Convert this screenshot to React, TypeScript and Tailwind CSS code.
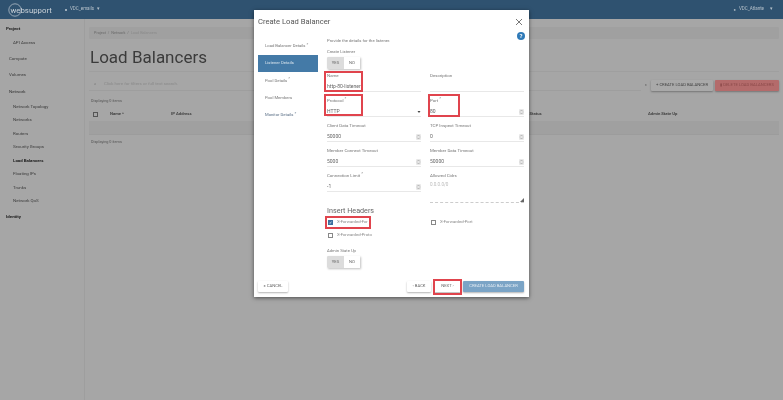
import React from "react";

const side: [string, string][] = [
  ["Project", "h-[14px] pl-[6px] font-bold text-[#222]"],
  ["API Access", "h-[15px] pl-[13px] text-[#3c3c3c]"],
  ["Compute", "h-[16px] pl-[9px] text-[#3c3c3c]"],
  ["Volumes", "h-[17px] pl-[9px] text-[#3c3c3c]"],
  ["Network", "h-[16px] pl-[9px] text-[#333]"],
  ["Network Topology", "h-[14px] pl-[13px] text-[#3c3c3c]"],
  ["Networks", "h-[13px] pl-[13px] text-[#3c3c3c]"],
  ["Routers", "h-[14px] pl-[13px] text-[#3c3c3c]"],
  ["Security Groups", "h-[13px] pl-[13px] text-[#3c3c3c]"],
  ["Load Balancers", "h-[14px] pl-[13px] font-bold text-[#222]"],
  ["Floating IPs", "h-[13px] pl-[13px] text-[#3c3c3c]"],
  ["Trunks", "h-[14px] pl-[13px] text-[#3c3c3c]"],
  ["Network QoS", "h-[13px] pl-[13px] text-[#3c3c3c]"],
  ["Identity", "h-[18px] pl-[6px] font-bold text-[#222]"],
];

function Spin() {
  return (
    <svg width="5" height="6" viewBox="0 0 5 6" className="rounded-[1px] bg-[#e8e8e8]">
      <path d="M1.2 2.4 L2.5 1 L3.8 2.4 M1.2 3.6 L2.5 5 L3.8 3.6" fill="none" stroke="#888" strokeWidth="0.5" />
    </svg>
  );
}

function Field({ label, value, req, spin, select }: { label: string; value: string; req?: boolean; spin?: boolean; select?: boolean }) {
  return (
    <div className="flex h-[25px] flex-col">
      <div className="mt-[5px] h-[6px] text-[4.4px] leading-[6px] text-[#777]">
        {label}
        {req && <sup className="text-[4px] leading-[0]"> *</sup>}
      </div>
      <div className="mt-[3px] flex h-[10px] items-end justify-between border-b border-[#e8e8e8] pb-[1px] text-[5px] leading-[7px] text-[#666]">
        <span>{value}</span>
        {spin && <Spin />}
        {select && (
          <svg width="4" height="6" viewBox="0 0 4 6">
            <path d="M0.5 2 L3.5 2 L2 4 Z" fill="#444" />
          </svg>
        )}
      </div>
    </div>
  );
}

function Toggle() {
  return (
    <div className="flex h-[12px] w-[33px] text-[4.2px] text-[#666] shadow-[1px_1px_2px_rgba(0,0,0,0.25)]">
      <div className="flex w-[17px] items-center justify-center rounded-l-[1px] bg-[#dcdcdc]">YES</div>
      <div className="flex w-[16px] items-center justify-center rounded-r-[1px] bg-white">NO</div>
    </div>
  );
}

function Check({ label, on }: { label: string; on?: boolean }) {
  return (
    <div className="flex h-[13px] items-center gap-[4px] pl-[1px] text-[4.2px] text-[#888]">
      <span className={`flex h-[5px] w-[5px] items-center justify-center border text-[4px] leading-none text-white ${on ? "border-[#3d6f9e] bg-[#3d6f9e]" : "border-[#888] bg-white"}`}>
        {on ? "✓" : ""}
      </span>
      {label}
    </div>
  );
}

function Btn({ children, cls }: { children: React.ReactNode; cls: string }) {
  return <div className={`flex h-[11px] items-center justify-center rounded-[1px] text-[4.2px] shadow-[0_1px_2px_rgba(0,0,0,0.3)] ${cls}`}>{children}</div>;
}

function Red({ cls }: { cls: string }) {
  return <div className={`absolute border-[2px] border-[#e0444d] ${cls}`} />;
}

export default function App() {
  return (
    <div className="relative h-[400px] w-[783px] overflow-hidden bg-[#a6a6a6] font-['Roboto',sans-serif] blur-[0.35px]">
      <header className="flex h-[19px] items-center justify-between bg-[#2f5270] pl-[8px] pr-[10px] text-[4.5px] text-[#b5c0ca]">
        <div className="flex items-center">
          <svg width="44" height="14" viewBox="0 0 44 14" className="mr-[13px]">
            <circle cx="7" cy="7" r="6.2" fill="none" stroke="#c3ccd4" strokeWidth="0.7" />
            <text x="2.5" y="9.6" fill="#c9d1d8" fontSize="7.8" fontFamily="Roboto, sans-serif">websupport</text>
          </svg>
          <span className="mr-[3px] h-[2px] w-[2px] rounded-full bg-[#c3ccd4]" />
          <span>VDC_emails</span>
          <span className="ml-[3px]">▾</span>
        </div>
        <div className="flex items-center gap-[3px]">
          <span className="text-[4px]">●</span>
          <span>VDC_Atlante</span>
          <span className="ml-[3px]">▾</span>
        </div>
      </header>

      <div className="flex h-[381px]">
        <aside className="w-[85px] border-r border-[#9e9e9e] pt-[3px] text-[4.4px]">
          {side.map(([t, c]) => (
            <div key={t} className={`flex items-center ${c}`}>{t}</div>
          ))}
        </aside>

        <main className="flex-1 pl-[4px] pr-[4px] pt-[8px]">
          <div className="flex h-[12px] items-center rounded-[1px] bg-[#a0a0a0] pl-[5px] text-[3.8px] text-[#6a6a6a]">
            Project&nbsp;&nbsp;/&nbsp;&nbsp;Network&nbsp;&nbsp;/&nbsp;&nbsp;<span className="text-[#8a8a8a]">Load Balancers</span>
          </div>
          <div className="mt-[5px] h-[28px] border-b border-[#9f9f9f] pl-[1px] text-[17px] leading-[26px] text-[#3b3b3b]">Load Balancers</div>
          <div className="mt-[7px] flex h-[12px] items-center">
            <div className="flex h-[12px] flex-1 items-center border-b border-[#9e9e9e] pl-[5px] text-[4.4px] text-[#8a8a8a]">
              <span className="mr-[8px] text-[#666]">⌕</span>Click here for filters or full text search.
            </div>
            <span className="mx-[4px] text-[4px] text-[#666]">×</span>
            <Btn cls="mr-[2px] w-[62px] bg-[#a9a9a9] text-[#444]">+ CREATE LOAD BALANCER</Btn>
            <Btn cls="w-[64px] bg-[#b46b6b] text-[#8c4a4a]">▮ DELETE LOAD BALANCERS</Btn>
          </div>
          <div className="mt-[7px] pl-[2px] text-[3.8px] text-[#555]">Displaying 0 items</div>
          <div className="mt-[4px] flex h-[13px] items-center text-[4.2px] font-bold text-[#444]">
            <span className="ml-[4px] h-[5px] w-[5px] border border-[#555]" />
            <span className="ml-[12px] w-[61px]">Name ^</span>
            <span className="w-[339px]">IP Address</span>
            <span className="w-[138px]">Operating Status</span>
            <span>Admin State Up</span>
          </div>
          <div className="h-[14px] border-b border-[#9c9c9c] bg-[#a0a0a0]" />
          <div className="mt-[4px] pl-[2px] text-[3.8px] text-[#555]">Displaying 0 items</div>
        </main>
      </div>

      <div className="absolute left-[254px] top-[10px] h-[287px] w-[275px] bg-white px-[4px] shadow-[0_1px_4px_rgba(0,0,0,0.55)]">
        <div className="flex h-[22px] items-center justify-between pt-[1px]">
          <span className="text-[7.6px] text-[#555]">Create Load Balancer</span>
          <svg width="8" height="8" viewBox="0 0 8 8" className="mr-[2px]">
            <path d="M1 1 L7 7 M7 1 L1 7" stroke="#555" strokeWidth="0.8" />
          </svg>
        </div>

        <div className="flex">
          <nav className="mt-[6px] w-[60px] text-[4.2px] text-[#777]">
            <div className="flex h-[17px] items-center pl-[7px]">Load Balancer Details<sup className="ml-[1px] text-[4px] leading-[0]">*</sup></div>
            <div className="flex h-[17px] items-center bg-[#447aa7] pl-[7px] text-[#d7e3ec]">Listener Details</div>
            <div className="flex h-[18px] items-center pl-[7px]">Pool Details<sup className="ml-[1px] text-[4px] leading-[0]">*</sup></div>
            <div className="flex h-[17px] items-center pl-[7px]">Pool Members</div>
            <div className="flex h-[17px] items-center pl-[7px] text-[#5a6f86]">Monitor Details<sup className="ml-[1px] text-[4px] leading-[0]">*</sup></div>
          </nav>

          <div className="ml-[9px] w-[197px]">
            <div className="flex h-[12px] items-start justify-between">
              <span className="pt-[6px] text-[4.2px] leading-[6px] text-[#777]">Provide the details for the listener.</span>
              <span className="-mr-[1px] flex h-[8px] w-[8px] items-center justify-center rounded-full bg-[#2f7ab8] text-[6px] font-bold leading-none text-white">?</span>
            </div>
            <div className="mt-[5px] h-[6px] text-[4.2px] leading-[6px] text-[#777]">Create Listener</div>
            <div className="mt-[2px]"><Toggle /></div>

            <div className="mt-[-1px] grid grid-cols-2 gap-x-[9px]">
              <Field label="Name" value="http-80-listener" />
              <Field label="Description" value="" />
              <Field label="Protocol" value="HTTP" req select />
              <Field label="Port" value="80" req spin />
              <Field label="Client Data Timeout" value="50000" spin />
              <Field label="TCP Inspect Timeout" value="0" spin />
              <Field label="Member Connect Timeout" value="5000" spin />
              <Field label="Member Data Timeout" value="50000" spin />
              <Field label="Connection Limit" value="-1" req spin />
              <div className="flex h-[25px] flex-col">
                <div className="mt-[5px] h-[6px] text-[4.4px] leading-[6px] text-[#777]">Allowed Cidrs</div>
                <div className="relative mt-[3px] h-[21px] shrink-0 border-b border-dashed border-[#ccc] text-[4.6px] text-[#bbb]">
                  0.0.0.0/0
                  <svg width="4" height="4" viewBox="0 0 4 4" className="absolute bottom-0 right-0">
                    <path d="M0 4 L4 0 L4 4 Z" fill="#666" />
                  </svg>
                </div>
              </div>
            </div>

            <div className="mt-[12px] h-[12px] text-[7.2px] leading-[12px] text-[#666]">Insert Headers</div>
            <div className="mt-[-1px] grid grid-cols-2 gap-x-[9px]">
              <Check label="X-Forwarded-For" on />
              <Check label="X-Forwarded-Port" />
              <Check label="X-Forwarded-Proto" />
            </div>
            <div className="mt-[6px] h-[6px] text-[4.2px] leading-[6px] text-[#777]">Admin State Up</div>
            <div className="mt-[2px]"><Toggle /></div>
          </div>
        </div>

        <div className="mt-[13px] flex items-center">
          <Btn cls="w-[30px] bg-white text-[#666]">× CANCEL</Btn>
          <div className="flex-1" />
          <Btn cls="w-[24px] bg-white text-[#666]">‹ BACK</Btn>
          <Btn cls="ml-[3px] w-[27px] bg-white text-[#666]">NEXT ›</Btn>
          <Btn cls="mx-[1px] ml-[2px] w-[61px] bg-[#7ba4c6] text-[#e4ecf3]">CREATE LOAD BALANCER</Btn>
        </div>
      </div>

      <Red cls="left-[324px] top-[71px] h-[21px] w-[39px]" />
      <Red cls="left-[324px] top-[94px] h-[22px] w-[39px]" />
      <Red cls="left-[428px] top-[94px] h-[23px] w-[32px]" />
      <Red cls="left-[325px] top-[216px] h-[13px] w-[46px]" />
      <Red cls="left-[433px] top-[279px] h-[16px] w-[29px]" />
    </div>
  );
}
